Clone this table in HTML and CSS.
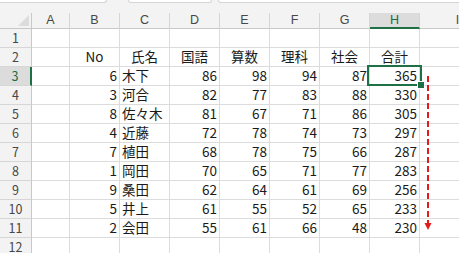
FILE: index.html
```
<!DOCTYPE html>
<html lang="ja">
<head>
<meta charset="utf-8">
<link rel="stylesheet" href="styles.css">
</head>
<body>
<div class="topbar">
  <div class="box box1"></div>
  <div class="box box2"></div>
  <div class="box box3"></div>
</div>
<div class="sheet">
  <div class="row head">
    <div class="corner"><span class="tri"></span></div>
    <div class="ch">A</div><div class="ch">B</div><div class="ch">C</div><div class="ch">D</div><div class="ch">E</div><div class="ch">F</div><div class="ch">G</div><div class="ch sel">H</div><div class="ch">I</div>
  </div>
  <div class="row"><div class="rh">1</div><div class="c"></div><div class="c"></div><div class="c"></div><div class="c"></div><div class="c"></div><div class="c"></div><div class="c"></div><div class="c"></div><div class="c"></div></div>
  <div class="row"><div class="rh">2</div><div class="c"></div><div class="c m">No</div><div class="c m">氏名</div><div class="c m">国語</div><div class="c m">算数</div><div class="c m">理科</div><div class="c m">社会</div><div class="c m">合計</div><div class="c"></div></div>
  <div class="row"><div class="rh sel">3</div><div class="c"></div><div class="c n">6</div><div class="c t">木下</div><div class="c n">86</div><div class="c n">98</div><div class="c n">94</div><div class="c n">87</div><div class="c n">365</div><div class="c"></div></div>
  <div class="row"><div class="rh">4</div><div class="c"></div><div class="c n">3</div><div class="c t">河合</div><div class="c n">82</div><div class="c n">77</div><div class="c n">83</div><div class="c n">88</div><div class="c n">330</div><div class="c"></div></div>
  <div class="row"><div class="rh">5</div><div class="c"></div><div class="c n">8</div><div class="c t">佐々木</div><div class="c n">81</div><div class="c n">67</div><div class="c n">71</div><div class="c n">86</div><div class="c n">305</div><div class="c"></div></div>
  <div class="row"><div class="rh">6</div><div class="c"></div><div class="c n">4</div><div class="c t">近藤</div><div class="c n">72</div><div class="c n">78</div><div class="c n">74</div><div class="c n">73</div><div class="c n">297</div><div class="c"></div></div>
  <div class="row"><div class="rh">7</div><div class="c"></div><div class="c n">7</div><div class="c t">植田</div><div class="c n">68</div><div class="c n">78</div><div class="c n">75</div><div class="c n">66</div><div class="c n">287</div><div class="c"></div></div>
  <div class="row"><div class="rh">8</div><div class="c"></div><div class="c n">1</div><div class="c t">岡田</div><div class="c n">70</div><div class="c n">65</div><div class="c n">71</div><div class="c n">77</div><div class="c n">283</div><div class="c"></div></div>
  <div class="row"><div class="rh">9</div><div class="c"></div><div class="c n">9</div><div class="c t">桑田</div><div class="c n">62</div><div class="c n">64</div><div class="c n">61</div><div class="c n">69</div><div class="c n">256</div><div class="c"></div></div>
  <div class="row"><div class="rh">10</div><div class="c"></div><div class="c n">5</div><div class="c t">井上</div><div class="c n">61</div><div class="c n">55</div><div class="c n">52</div><div class="c n">65</div><div class="c n">233</div><div class="c"></div></div>
  <div class="row"><div class="rh">11</div><div class="c"></div><div class="c n">2</div><div class="c t">会田</div><div class="c n">55</div><div class="c n">61</div><div class="c n">66</div><div class="c n">48</div><div class="c n">230</div><div class="c"></div></div>
  <div class="row"><div class="rh">12</div><div class="c"></div><div class="c"></div><div class="c"></div><div class="c"></div><div class="c"></div><div class="c"></div><div class="c"></div><div class="c"></div><div class="c"></div></div>

  <div class="selbox"><span class="handle"></span></div>
  <svg class="arrow" width="12" height="160" viewBox="0 0 12 160">
    <line x1="6" y1="0" x2="6" y2="148" stroke="#e41b1b" stroke-width="2" stroke-dasharray="6 3"/>
    <polygon points="2.5,147 9.5,147 6,154" fill="#e41b1b"/>
  </svg>
</div>
</body>
</html>
```
FILE: styles.css
```
html, body {
  margin: 0;
  padding: 0;
  background: #ffffff;
  overflow: hidden;
}
body {
  width: 459px;
  height: 253px;
  font-family: "Noto Sans CJK JP", "DejaVu Sans", sans-serif;
  color: #1a1a1a;
}
.topbar {
  height: 13px;
  background: #f3f3f3;
  display: flex;
  align-items: flex-start;
}
.box {
  height: 3px;
  background: #ffffff;
  border: 1px solid #d4d4d4;
  border-top: none;
  border-radius: 0 0 5px 5px;
  box-sizing: border-box;
}
.box1 { width: 110px; margin-left: -3px; }
.box2 { width: 84px; margin-left: 21px; }
.box3 { flex: 1; margin-left: 6px; margin-right: -6px; }
.sheet {
  position: relative;
  width: 459px;
  overflow: hidden;
}
.row {
  display: grid;
  grid-template-columns: 32px 38px repeat(7, 50px) 76px;
  height: 19px;
}
.row.head {
  height: 16px;
  background: #f3f3f3;
}
.row > div {
  box-sizing: border-box;
  border-right: 1px solid #dcdcdc;
  border-bottom: 1px solid #dcdcdc;
  display: flex;
  align-items: center;
  white-space: nowrap;
  line-height: 1;
}
.corner {
  position: relative;
  background: #f3f3f3;
  border-right-color: #c8c8c8 !important;
  border-bottom-color: #c8c8c8 !important;
}
.tri {
  position: absolute;
  right: 2px;
  bottom: 2px;
  width: 0;
  height: 0;
  border-left: 11px solid transparent;
  border-bottom: 11px solid #dcdcdc;
}
.ch {
  justify-content: center;
  font-family: "Liberation Sans", "DejaVu Sans", sans-serif;
  font-size: 12.5px;
  color: #474747;
  background: #f3f3f3;
  border-right-color: #d6d6d6 !important;
  border-bottom-color: #c8c8c8 !important;
}
.ch.sel {
  background: #dcdcdc;
  color: #1e6b40;
  border-bottom: 2px solid #1e7145 !important;
}
.rh {
  justify-content: center;
  font-size: 12.5px;
  color: #474747;
  background: #f3f3f3;
  border-right-color: #c8c8c8 !important;
  border-bottom-color: #d6d6d6 !important;
}
.rh.sel {
  background: #dcdcdc;
  color: #1e6b40;
  border-right: 2px solid #1e7145 !important;
}
.c {
  font-size: 13.5px;
}
.n {
  justify-content: flex-end;
  padding-right: 2px;
}
.t {
  justify-content: flex-start;
  padding-left: 2px;
}
.m {
  justify-content: center;
}
.selbox {
  position: absolute;
  left: 367px;
  top: 52px;
  width: 55px;
  height: 21px;
  border: 2px solid #1e7145;
  box-sizing: border-box;
}
.handle {
  position: absolute;
  right: -5px;
  bottom: -5px;
  width: 6px;
  height: 6px;
  background: #1e7145;
  border: 1px solid #ffffff;
}
.arrow {
  position: absolute;
  left: 422px;
  top: 63px;
}
```
